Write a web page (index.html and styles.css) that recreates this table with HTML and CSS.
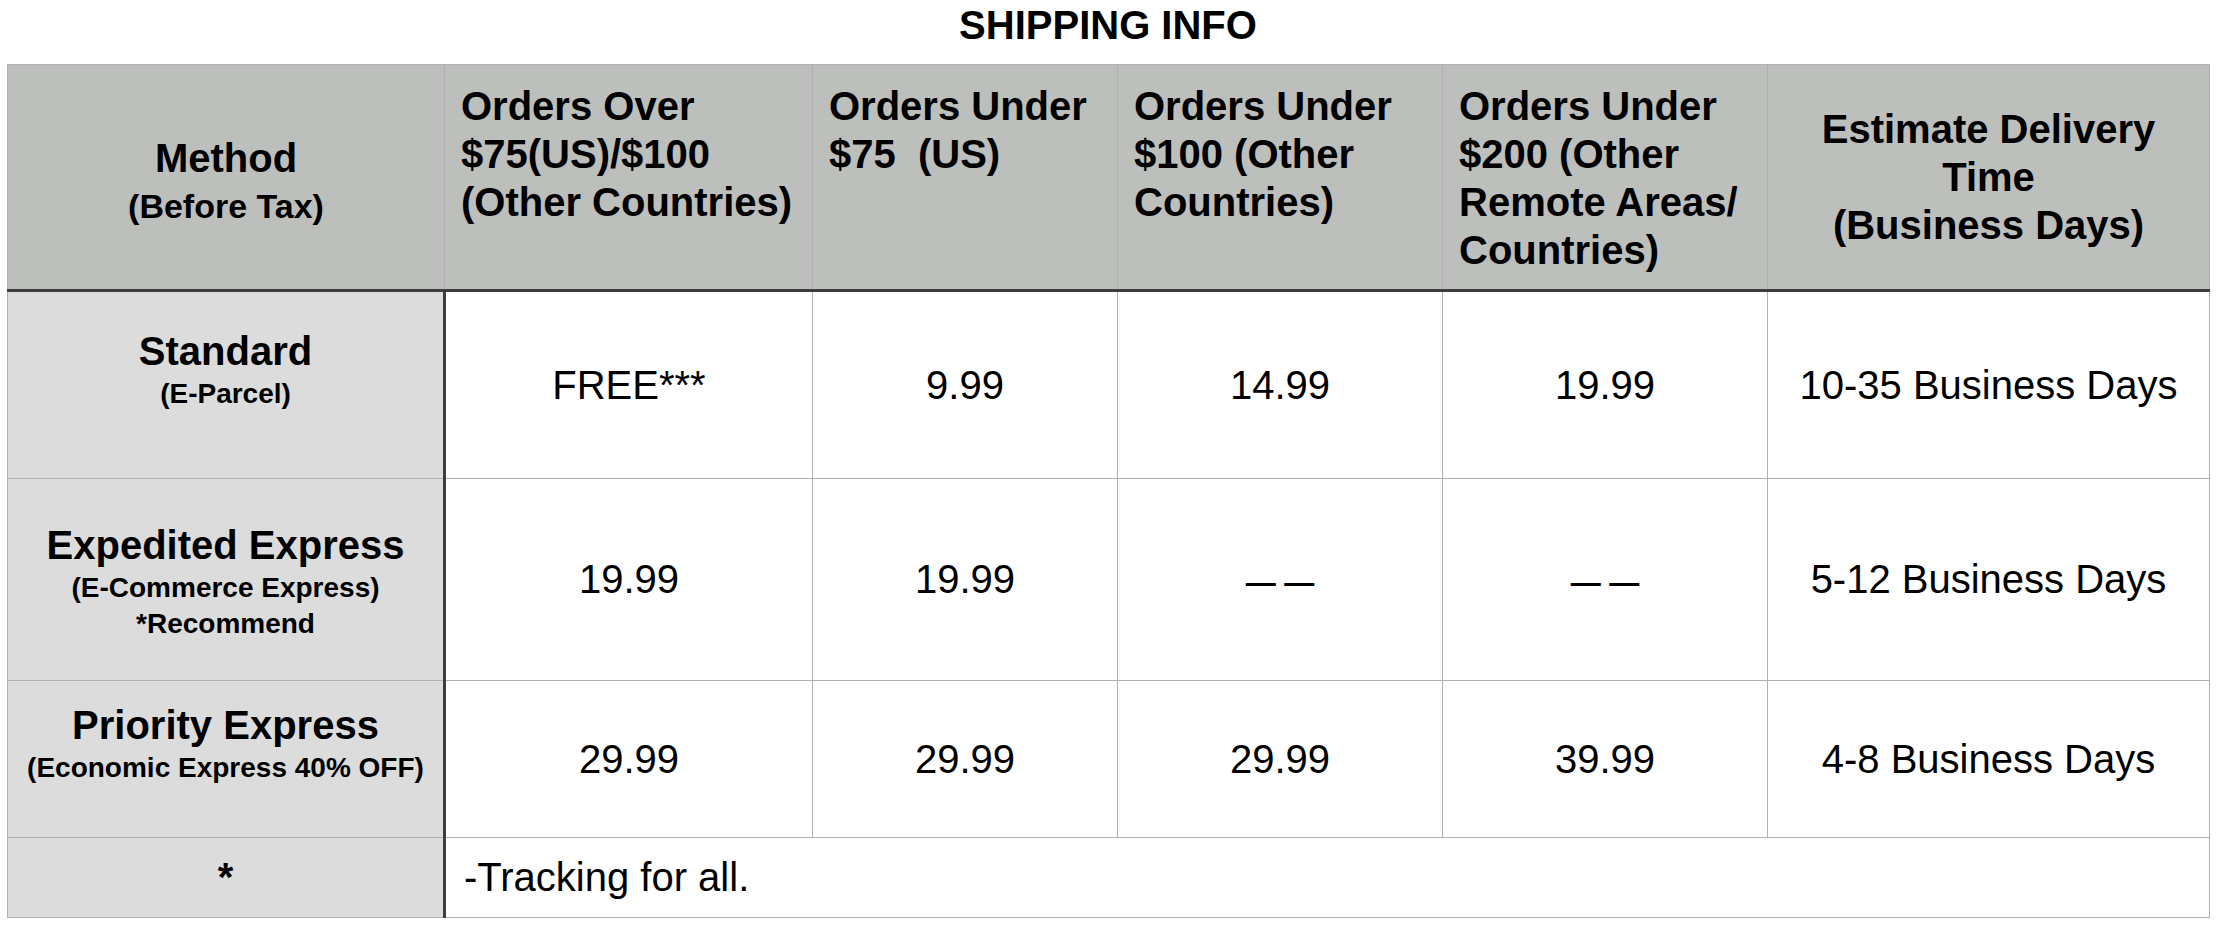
FILE: index.html
```
<!DOCTYPE html>
<html lang="en">
<head>
<meta charset="utf-8">
<title>Shipping Info</title>
<link rel="stylesheet" href="styles.css">
</head>
<body>
<div class="page">
  <h1 class="title">SHIPPING INFO</h1>
  <table class="ship">
    <colgroup>
      <col class="c1"><col class="c2"><col class="c3"><col class="c4"><col class="c5"><col class="c6">
    </colgroup>
    <thead>
      <tr class="head">
        <th class="hmethod"><div class="hm-main">Method</div><div class="hm-sub">(Before Tax)</div></th>
        <th class="hleft">Orders Over<br>$75(US)/$100<br>(Other Countries)</th>
        <th class="hleft">Orders Under<br>$75&nbsp; (US)</th>
        <th class="hleft">Orders Under<br>$100 (Other<br>Countries)</th>
        <th class="hleft">Orders Under<br>$200 (Other<br>Remote Areas/<br>Countries)</th>
        <th class="hcenter">Estimate Delivery<br>Time<br>(Business Days)</th>
      </tr>
    </thead>
    <tbody>
      <tr class="r1">
        <td class="method"><div class="mblock"><div class="mname">Standard</div><div class="msub">(E-Parcel)</div></div></td>
        <td class="val">FREE***</td>
        <td class="val">9.99</td>
        <td class="val">14.99</td>
        <td class="val">19.99</td>
        <td class="val">10-35 Business Days</td>
      </tr>
      <tr class="r2">
        <td class="method"><div class="mblock"><div class="mname">Expedited Express</div><div class="msub">(E-Commerce Express)</div><div class="msub">*Recommend</div></div></td>
        <td class="val">19.99</td>
        <td class="val">19.99</td>
        <td class="val"><span class="dash">— —</span></td>
        <td class="val"><span class="dash">— —</span></td>
        <td class="val">5-12 Business Days</td>
      </tr>
      <tr class="r3">
        <td class="method"><div class="mblock"><div class="mname">Priority Express</div><div class="msub">(Economic Express 40% OFF)</div></div></td>
        <td class="val">29.99</td>
        <td class="val">29.99</td>
        <td class="val">29.99</td>
        <td class="val">39.99</td>
        <td class="val">4-8 Business Days</td>
      </tr>
      <tr class="r4">
        <td class="method star">*</td>
        <td class="note" colspan="5">-Tracking for all.</td>
      </tr>
    </tbody>
  </table>
</div>
</body>
</html>
```
FILE: styles.css
```
html, body {
  margin: 0;
  padding: 0;
  background: #ffffff;
}

.page {
  padding: 0 8px 0 7px;
  font-family: "Liberation Sans", Arial, Helvetica, sans-serif;
  color: #000000;
}

.title {
  margin: 0 0 14px 0;
  height: 50px;
  line-height: 50px;
  font-size: 40px;
  font-weight: bold;
  text-align: center;
}

.ship {
  border-collapse: collapse;
  table-layout: fixed;
  width: 2202px;
  border: 1px solid #9c9c9c;
}

.c1 { width: 437px; }
.c2 { width: 368px; }
.c3 { width: 305px; }
.c4 { width: 325px; }
.c5 { width: 325px; }
.c6 { width: 442px; }

.ship th,
.ship td {
  border: 1px solid #b0b0b0;
  padding: 0;
}

.head th {
  background: #bdbfbd;
  font-size: 40px;
  font-weight: bold;
  line-height: 48px;
  height: 201px;
  padding: 17px 16px 6px 16px;
  border-bottom: 3px solid #3d3d3d;
  white-space: nowrap;
}

.head .hleft {
  text-align: left;
  vertical-align: top;
}

.head .hcenter {
  text-align: center;
  vertical-align: middle;
  padding-top: 6px;
}

.head .hmethod {
  text-align: center;
  vertical-align: middle;
  padding-top: 15px;
}

.hm-main {
  font-size: 40px;
  line-height: 48px;
}

.hm-sub {
  font-size: 34px;
  line-height: 48px;
}

.method {
  background: #dcdcdc;
  border-right: 3px solid #3d3d3d !important;
  text-align: center;
  vertical-align: middle;
  font-weight: bold;
  padding-top: 3px !important;
}

.mblock {
  min-height: 122px;
}

.mname {
  font-size: 40px;
  line-height: 50px;
}

.msub {
  font-size: 28px;
  line-height: 36px;
}

.val {
  text-align: center;
  vertical-align: middle;
  font-size: 40px;
  background: #ffffff;
}

.dash {
  font-size: 30px;
  font-weight: bold;
}

.r1 td { height: 183px; }
.r2 td { height: 198px; }
.r3 td { height: 153px; }
.r4 td { height: 79px; }

.star {
  font-size: 40px;
  padding-top: 0 !important;
}

.note {
  text-align: left;
  vertical-align: middle;
  font-size: 40px;
  padding-left: 18px !important;
}
```
